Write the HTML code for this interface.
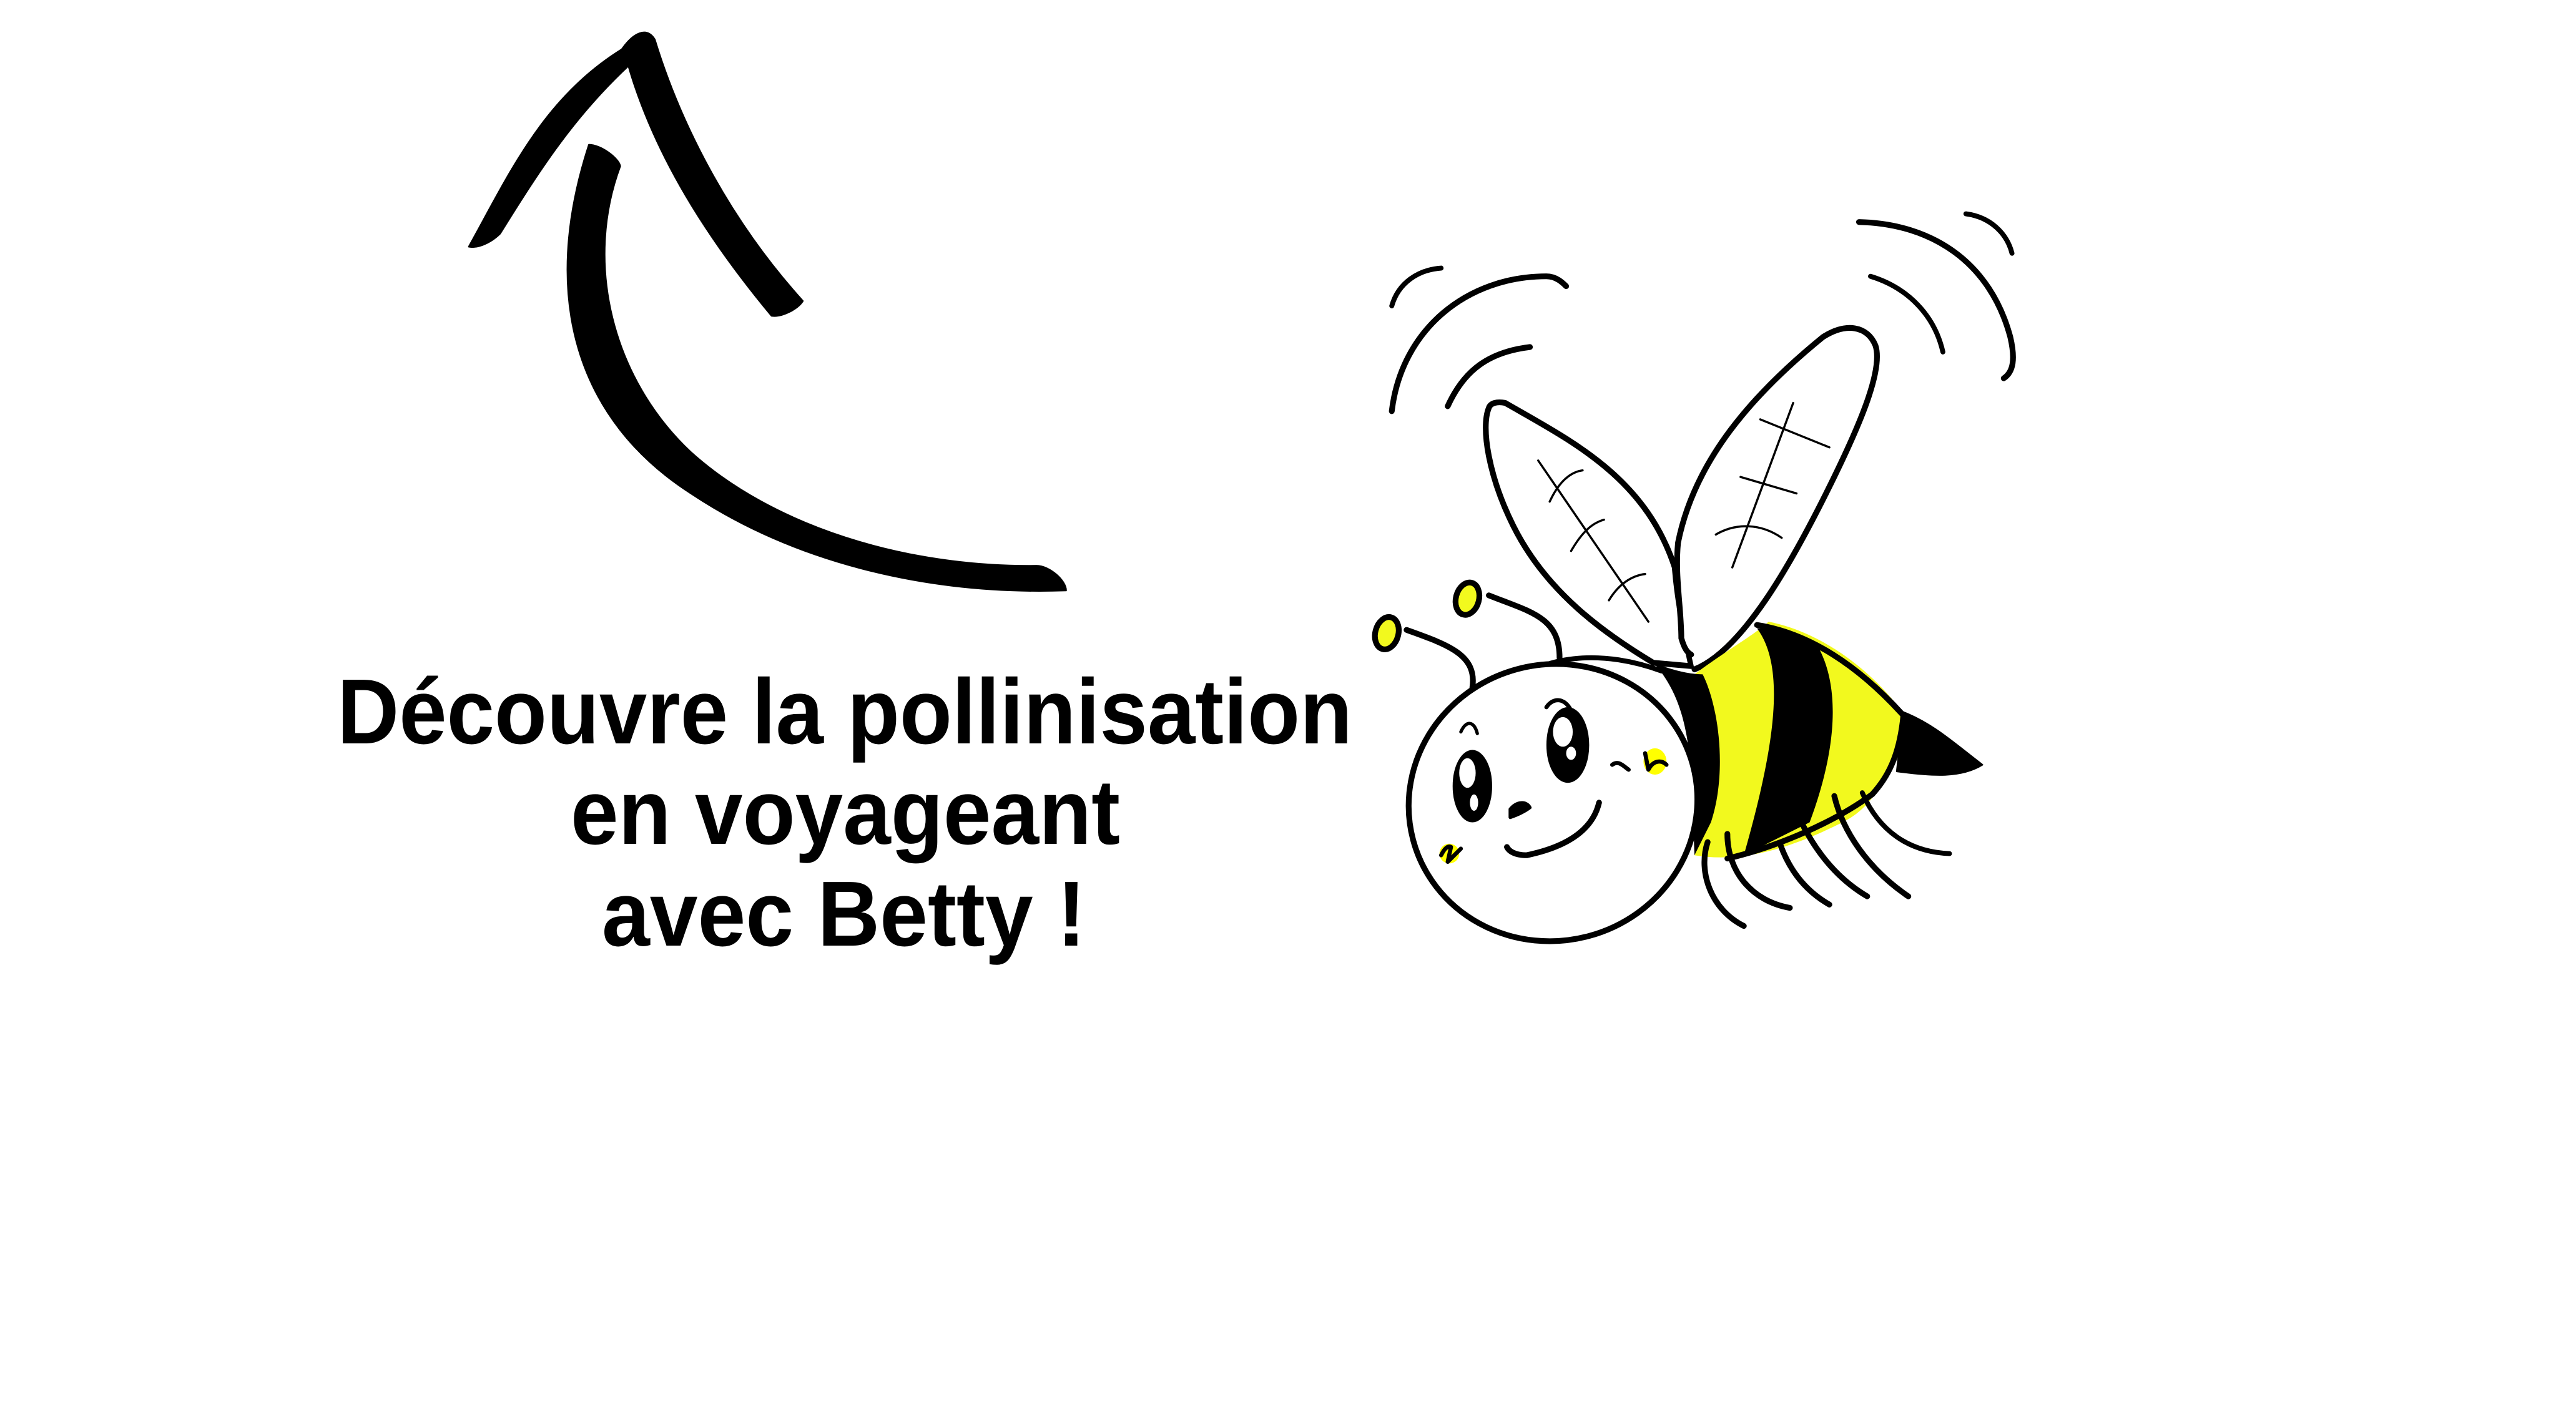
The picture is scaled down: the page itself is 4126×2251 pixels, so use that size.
<!DOCTYPE html>
<html><head><meta charset="utf-8"><style>html,body{margin:0;padding:0;background:#fff;width:4126px;height:2251px;overflow:hidden}svg{display:block}</style></head>
<body>
<svg width="4126" height="2251" viewBox="0 0 4126 2251" xmlns="http://www.w3.org/2000/svg">
<rect width="4126" height="2251" fill="#fff"/>
<g font-family="'Liberation Sans', sans-serif" font-weight="bold" font-size="148" fill="#000">
<text x="540" y="1191" textLength="1626" lengthAdjust="spacingAndGlyphs">Découvre la pollinisation</text>
<text x="914" y="1352" textLength="880" lengthAdjust="spacingAndGlyphs">en voyageant</text>
<text x="964" y="1515" textLength="775" lengthAdjust="spacingAndGlyphs">avec Betty !</text>
</g>
<g transform="scale(2.635)" stroke="#000" stroke-linecap="round" stroke-linejoin="round" fill="none">
<path d="M285 150 C310 105 330 60 378 30 L382 40 C350 70 330 100 304 142 C298 148 290 151 285 150 Z" fill="#000" stroke-width="1"/>
<path d="M378 30 C385 20 393 16 398 24 C412 70 440 130 488 183 C485 188 475 193 469 192 C430 145 398 95 382 40 Z" fill="#000" stroke-width="1"/>
<path d="M358 88 C365 88 376 96 377 101 C355 160 372 230 420 275 C470 320 550 345 630 344 C638 344 648 353 648 359 C560 362 480 340 420 300 C350 255 328 180 358 88 Z" fill="#000" stroke-width="1"/>
<path d="M846 186 C850 172 862 164 876 163" stroke-width="3"/>
<path d="M846 250 C852 200 892 168 940 168 C946 168 950 172 952 174" stroke-width="3.5"/>
<path d="M880 247 C890 225 905 214 930 211" stroke-width="3.5"/>
<path d="M1130 135 C1175 136 1210 160 1222 205 C1225 218 1224 226 1218 230" stroke-width="3.5"/>
<path d="M1195 130 C1210 132 1220 142 1223 154" stroke-width="3"/>
<path d="M1137 168 C1160 175 1176 192 1181 214" stroke-width="3"/>
<path d="M905 248 C900 260 905 290 920 320 C940 360 975 385 1005 403 L1028 405 C1025 390 1020 370 1018 345 C1000 290 955 268 915 245 C910 244 906 245 905 248 Z" fill="#fff" stroke-width="3.5"/>
<path d="M1030 407 C1060 395 1090 340 1110 300 C1130 260 1145 225 1140 210 C1135 198 1122 196 1108 205 C1065 240 1030 280 1020 330 C1018 350 1022 370 1022 388 C1024 395 1026 397 1028 398" fill="#fff" stroke-width="3.5"/>
<g stroke-width="1.3">
<path d="M935 280 L1002 378"/><path d="M942 305 C948 292 955 287 962 286"/><path d="M955 335 C962 323 968 318 975 316"/><path d="M978 365 C984 355 992 350 1000 349"/>
<path d="M1090 245 L1053 345"/><path d="M1070 255 L1112 272"/><path d="M1058 290 L1092 300"/><path d="M1043 325 C1055 318 1070 318 1083 327"/>
</g>
<path d="M1030 410 C1050 395 1068 385 1075 378 C1110 385 1140 410 1158 435 C1150 470 1140 490 1120 500 C1090 515 1060 525 1030 520 C1040 480 1045 440 1030 410 Z" fill="#f2f91e" stroke="none"/>
<path d="M1068 382 C1085 405 1080 450 1060 520 L1100 500 C1115 460 1120 420 1105 393 C1095 387 1080 382 1068 382 Z" fill="#000" stroke="none"/>
<path d="M1005 403 C1018 408 1028 410 1035 410 C1045 430 1050 470 1040 500 L1030 520 C1028 470 1030 430 1005 403 Z" fill="#000" stroke="none"/>
<path d="M1068 380 C1100 385 1130 405 1157 435 C1155 455 1150 470 1138 483 C1115 500 1080 515 1050 522" stroke-width="3.5"/>
<path d="M1157 433 C1175 440 1188 452 1205 465 C1192 473 1175 472 1153 469 Z" fill="#000" stroke-width="1"/>
<path d="M1038 512 C1032 530 1040 553 1060 563" stroke-width="3.5"/>
<path d="M1050 507 C1050 530 1065 548 1088 552" stroke-width="3.5"/>
<path d="M1082 513 C1088 530 1098 542 1112 550" stroke-width="3.5"/>
<path d="M1095 500 C1105 520 1118 535 1135 545" stroke-width="3.5"/>
<path d="M1115 484 C1120 505 1135 528 1160 545" stroke-width="3.5"/>
<path d="M1132 482 C1142 505 1160 518 1185 519" stroke-width="3"/>
<path d="M855 383 C880 392 898 398 895 418" stroke-width="3.5"/>
<path d="M905 362 C930 372 948 375 948 400" stroke-width="3.5"/>
<ellipse cx="843" cy="385" rx="7" ry="10" transform="rotate(15 843 385)" fill="#f2f91e" stroke-width="3.5"/>
<ellipse cx="892" cy="364" rx="7" ry="10" transform="rotate(15 892 364)" fill="#f2f91e" stroke-width="3.5"/>
<path d="M920 415 C940 398 975 395 1010 408" stroke-width="3"/>
<ellipse cx="944" cy="488" rx="88" ry="84" transform="rotate(-15 944 488)" fill="#fff" stroke-width="3.5"/>
<ellipse cx="895" cy="478" rx="11" ry="21" fill="#000" stroke-width="2"/>
<ellipse cx="953" cy="453" rx="12" ry="22" fill="#000" stroke-width="2"/>
<ellipse cx="892" cy="470" rx="5" ry="9" fill="#fff" stroke="none"/>
<ellipse cx="950" cy="445" rx="6" ry="9" fill="#fff" stroke="none"/>
<ellipse cx="896" cy="488" rx="2.5" ry="5" fill="#fff" stroke="none"/>
<ellipse cx="955" cy="458" rx="3" ry="4" fill="#fff" stroke="none"/>
<path d="M888 445 C891 438 896 438 898 446" stroke-width="2"/>
<path d="M940 430 C944 424 951 424 955 432" stroke-width="2.5"/>
<path d="M918 492 C922 487 928 487 930 491 C926 494 921 496 918 497 Z" fill="#000" stroke-width="2"/>
<path d="M972 488 C968 505 952 515 928 520 C920 520 917 517 916 515" stroke-width="3.5"/>
<ellipse cx="1006" cy="463" rx="7" ry="8" fill="#ffff00" stroke="none"/>
<path d="M980 465 C984 462 987 466 990 468 M1000 458 L1002 468 C1005 462 1010 462 1013 465" stroke-width="2.5"/>
<ellipse cx="881" cy="519" rx="6" ry="6" fill="#ffff00" stroke="none"/>
<path d="M876 520 C878 516 880 514 882 515 L880 524 L888 516" stroke-width="2.5"/>
</g>
</svg>
</body></html>
